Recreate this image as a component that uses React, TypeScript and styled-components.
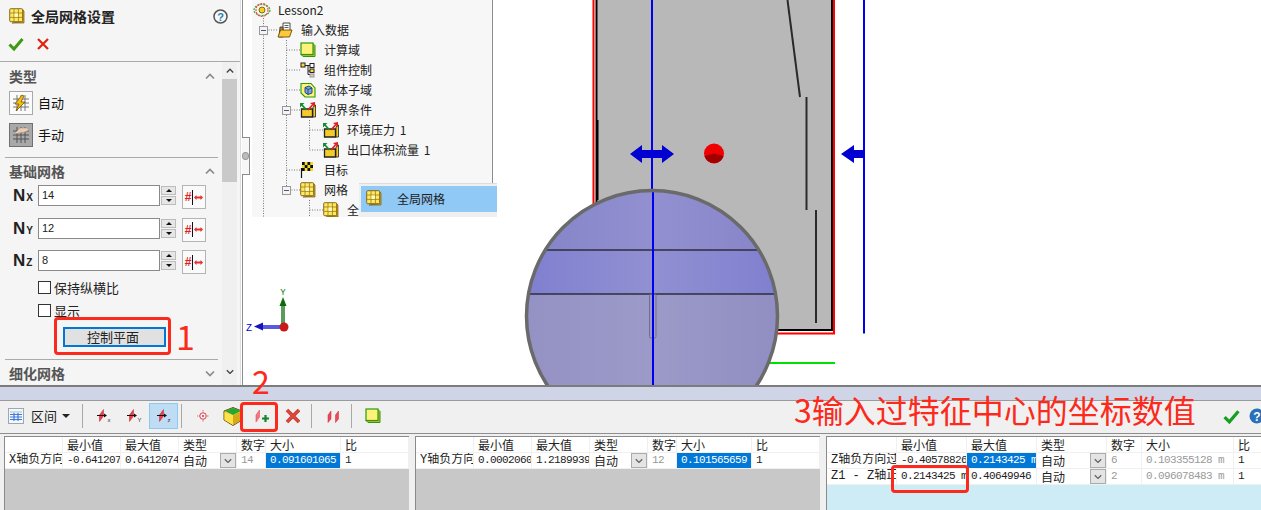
import React from "react";
import styled, { createGlobalStyle } from "styled-components";

const CJK = `"Noto Sans CJK SC", "Liberation Sans", sans-serif`;
const RED = "#fb2a1c";

const Global = createGlobalStyle`
  html, body { margin: 0; padding: 0; background: #fff; }
  body { font-family: ${CJK}; color: #111; }
  * { box-sizing: border-box; }
`;

const Page = styled.div`width:1261px;height:510px;display:flex;flex-direction:column;overflow:hidden;position:relative;`;
const Top = styled.div`height:385px;display:flex;position:relative;`;

/* ---------- left property pane ---------- */
const Pane = styled.aside`width:241px;flex:none;background:#f5f5f5;border-right:1px solid #dedede;display:flex;flex-direction:column;position:relative;`;
const Sash = styled.div`width:2px;flex:none;background:linear-gradient(90deg,#fff 0 1px,#8c8c8c 1px);position:relative;z-index:3;`;
const Notch = styled.div`position:absolute;left:1px;top:137px;width:8px;height:38px;border:1px solid #8c8c8c;border-left:0;background:#f7f7f7;display:flex;align-items:center;justify-content:center;
  &::after{content:"";width:6px;height:6px;border-radius:50%;background:#bbb;border:1px solid #999;}`;
const PaneHeader = styled.header`height:32px;display:flex;align-items:center;padding:0 12px 0 9px;`;
const PaneTitle = styled.h1`margin:0 0 0 6px;font-size:14px;font-weight:700;line-height:18px;flex:1;color:#222;`;
const PaneActions = styled.div`height:30px;display:flex;align-items:center;gap:13px;padding:0 0 6px 8px;border-bottom:1px solid #aaa;`;
const PaneBody = styled.div`flex:1;display:flex;min-height:0;`;
const Sections = styled.div`width:222px;flex:none;padding-top:1px;overflow:hidden;`;
const SectionHead = styled.div`height:20px;margin-top:3px;padding:0 7px 0 9px;display:flex;align-items:center;justify-content:space-between;font-size:14px;font-weight:700;color:#555;`;
const Rule = styled.div<{ $top: number }>`height:1px;background:#aaa;margin:${(p) => p.$top}px 4px 0 5px;`;
const ModeRow = styled.div<{ $top: number }>`display:flex;align-items:center;gap:5px;margin:${(p) => p.$top}px 0 0 9px;font-size:13px;height:24px;`;
const ModeText = styled.span`padding-bottom:2px;`;
const ModeButton = styled.div<{ $on?: boolean }>`width:24px;height:24px;border:1px solid ${(p) => (p.$on ? "#707070" : "#a8a8a8")};background:${(p) => (p.$on ? "#a9a9a9" : "#fbfbfb")};display:flex;align-items:center;justify-content:center;`;
const Fields = styled.div`display:flex;flex-direction:column;gap:8.5px;margin-top:4px;`;
const FieldRow = styled.div`display:flex;height:24px;align-items:flex-start;padding-left:13px;`;
const FieldLabel = styled.div`width:25px;font:700 17px/21px "Liberation Sans",sans-serif;color:#222;
  small{font-size:10px;margin-left:1px;}`;
const NumberField = styled.div`width:122px;height:21px;border:1px solid #8a8a8a;background:#fff;font:11px/18px "Liberation Sans",sans-serif;padding-left:3px;color:#222;`;
const Spin = styled.div`width:15px;margin-left:1px;display:flex;flex-direction:column;gap:1px;padding-top:1px;`;
const SpinButton = styled.div<{ $down?: boolean }>`height:9px;background:#e6e6e6;border:1px solid #bcbcbc;display:flex;align-items:center;justify-content:center;
  &::after{content:"";border-left:3.5px solid transparent;border-right:3.5px solid transparent;${(p) => (p.$down ? "border-top:3.5px solid #111;" : "border-bottom:3.5px solid #111;")}}`;
const PitchButton = styled.div`width:24px;height:24px;margin-left:6px;border:1px solid #b4b4b4;background:#fafafa;display:flex;align-items:center;justify-content:center;gap:1px;font:700 12px/1 "Liberation Sans",sans-serif;color:#e02020;`;
const CheckRow = styled.label<{ $top: number }>`display:flex;align-items:center;height:13px;margin:${(p) => p.$top}px 0 0 38px;font-size:13px;color:#222;`;
const Box = styled.span`width:13px;height:13px;border:1px solid #333;background:#fff;margin-right:3px;flex:none;`;
const PlaneButton = styled.div`width:103px;height:20px;margin:10px 0 0 63px;border:2px solid #0078d7;background:#e1e1e1;font-size:13px;line-height:16px;text-align:center;color:#222;padding-right:3px;`;
const ScrollBar = styled.div`width:15px;flex:none;background:#f0f0f0;position:relative;display:flex;flex-direction:column;`;
const ScrollArrow = styled.div<{ $end?: boolean }>`height:17px;display:flex;align-items:center;justify-content:center;margin-bottom:${(p) => (p.$end ? 5 : 0)}px;`;
const ScrollThumb = styled.div`height:103px;background:#c9c9c9;`;
const ScrollSpacer = styled.div`flex:1;`;

const Mark = styled.div<{ $x: number; $y: number; $w: number; $h: number }>`position:absolute;left:${(p) => p.$x}px;top:${(p) => p.$y}px;width:${(p) => p.$w}px;height:${(p) => p.$h}px;border:3px solid ${RED};border-radius:4px;z-index:5;pointer-events:none;`;
const Note = styled.div<{ $x: number; $y: number; $size: number }>`position:absolute;left:${(p) => p.$x}px;top:${(p) => p.$y}px;font-size:${(p) => p.$size}px;line-height:40px;color:${RED};white-space:nowrap;z-index:5;font-weight:400;`;

/* ---------- viewport + tree ---------- */
const Main = styled.main`flex:1;position:relative;overflow:hidden;background:#fff;`;
const Scene = styled.svg`display:block;width:100%;height:100%;`;
const Tree = styled.nav`position:absolute;left:9px;top:0;width:241px;height:217px;background:#f7f7f7;border-right:1px solid #8c8c8c;overflow:hidden;`;
const TreeLines = styled.svg`position:absolute;left:0;top:0;width:241px;height:217px;`;
const TreeRow = styled.div<{ $level: number }>`position:relative;height:20px;display:flex;align-items:center;padding-left:${(p) => (p.$level === 0 ? 2 : p.$level * 23 + 2)}px;font-size:12px;color:#222;white-space:nowrap;word-spacing:2px;
  svg{flex:none;} span.t{margin-left:8px;padding-bottom:2px;}`;
const Expander = styled.div`width:9px;height:9px;margin:0 9px 0 -18px;border:1px solid #999;background:#f4f4f4;position:relative;flex:none;
  &::after{content:"";position:absolute;left:1px;right:1px;top:3px;height:1px;background:#557;}`;
const Popup = styled.div`position:absolute;left:116px;top:183px;width:138px;height:34px;background:#efefef;border-top:1px solid #ddd;padding:2px 0 0 2px;z-index:2;`;
const PopupItem = styled.div`height:26px;background:#90c8f6;display:flex;align-items:center;padding:0 0 2px 5px;font-size:12px;color:#222;
  span{margin-left:15px;}`;

/* ---------- bottom editor ---------- */
const Dock = styled.section`height:125px;position:relative;border-top:2px solid #7c7c7c;background:#f0f0f0;display:flex;flex-direction:column;`;
const Band = styled.div`height:13px;background:#cfd4e6;border-bottom:1px solid #9a9a9a;box-sizing:content-box;`;
const Toolbar = styled.div`height:32px;display:flex;align-items:center;padding:0 0 2px 8px;background:#f0f0f0;overflow:hidden;flex:none;`;
const RangeLabel = styled.div`font-size:13px;margin:0 5px 2px 7px;color:#222;`;
const Caret = styled.div`border-left:4px solid transparent;border-right:4px solid transparent;border-top:4px solid #222;margin-right:9px;`;
const Sep = styled.div`width:1px;height:24px;background:#a8a8a8;margin:0 6px 0 3px;flex:none;`;
const Tool = styled.div<{ $w?: number; $on?: boolean }>`width:${(p) => p.$w ?? 30}px;height:26px;display:flex;align-items:center;justify-content:center;flex:none;${(p) => (p.$on ? "background:#bfdcf5;border:1px solid #90c8f0;" : "")}`;
const ToolEnd = styled.div`margin-left:auto;display:flex;align-items:center;gap:9px;margin-right:-4px;`;
const Grids = styled.div`flex:1;display:flex;gap:6px;padding-left:4px;border-top:1px solid #8e8e8e;padding-top:2px;min-height:0;`;
const GridPane = styled.div<{ $w: number; $tint?: boolean }>`width:${(p) => p.$w}px;flex:none;background:${(p) => (p.$tint ? "#cdecf5" : "#c8c8c8")};border:solid #8a8a8a;border-width:1px 0 0 1px;`;
const Table = styled.div<{ $cols: string }>`display:grid;grid-template-columns:${(p) => p.$cols};grid-auto-rows:16px;background:#fff;`;
const Cell = styled.div<{ $sel?: boolean; $dim?: boolean; $mono?: boolean }>`height:16px;padding-left:4px;overflow:hidden;white-space:nowrap;border-right:1px solid #f0f0f0;border-bottom:1px solid #f0f0f0;display:flex;align-items:center;justify-content:space-between;
  font:${(p) => (p.$mono ? `11px/15px "Liberation Mono",monospace` : `12px/15px ${CJK}`)};${(p) => (p.$mono ? "letter-spacing:-0.6px;" : "")}
  color:${(p) => (p.$sel ? "#fff" : p.$dim ? "#9a9a9a" : "#222")};background:${(p) => (p.$sel ? "#0078d7" : "#fff")};`;
const RowLabel = styled.span`font:12px/15px "Liberation Mono","Noto Sans CJK SC",monospace;`;
const Drop = styled.div`width:16px;height:15px;background:#e4e4e4;border:1px solid #ababab;flex:none;display:flex;align-items:center;justify-content:center;`;

/* ---------- icons ---------- */
const Check = ({ s = 16, c = "#3f9a12" }: { s?: number; c?: string }) => (
  <svg width={s} height={s} viewBox="0 0 16 16"><path d="M1.500 8.500 6 13 14.500 3" fill="none" stroke={c} strokeWidth="3" /></svg>
);
const Cross = () => (
  <svg width="12" height="12" viewBox="0 0 12 12"><path d="M1 1 11 11M11 1 1 11" stroke="#e2200e" strokeWidth="2.200" /></svg>
);
const Help = () => (
  <svg width="15" height="15" viewBox="0 0 15 15"><circle cx="7.500" cy="7.500" r="6.500" fill="#f4f8fb" stroke="#555" strokeWidth="1.500" /><text x="7.500" y="11.500" textAnchor="middle" fontFamily="Liberation Sans" fontWeight="700" fontSize="11" fill="#2c7da8">?</text></svg>
);
const Chevron = ({ down, c = "#8a8a8a", s = 10 }: { down?: boolean; c?: string; s?: number }) => (
  <svg width={s} height={s * 0.7} viewBox="0 0 10 7"><path d={down ? "M1 1.500 5 5.500 9 1.500" : "M1 5.500 5 1.500 9 5.500"} fill="none" stroke={c} strokeWidth="1.700" /></svg>
);
const Mesh = ({ s = 16 }: { s?: number }) => (
  <svg width={s} height={s} viewBox="0 0 16 16">
    <path d="M3 15h12V3l-1.500-1.500V13.500z" fill="#d8a820" stroke="#7a5c10" strokeWidth=".7" />
    <rect x=".7" y=".7" width="13" height="13" rx="1" fill="#ffe95e" stroke="#7a5c10" strokeWidth=".9" />
    <path d="M5 1v12.500M9.400 1v12.500M1 5h12.500M1 9.400h12.500" stroke="#9a7a18" strokeWidth=".8" />
    <rect x="5.500" y="5.500" width="3.400" height="3.400" fill="#fffbc8" />
  </svg>
);
const GridBolt = () => (
  <svg width="18" height="18" viewBox="0 0 18 18">
    <path d="M5 1v16M9 1v16M13 1v16M1 5h16M1 9h16M1 13h16" stroke="#777" />
    <path d="M10 1 3 10h4l-3 7 9-9H9l3-6z" fill="#f6c010" stroke="#7a5200" strokeWidth=".8" />
  </svg>
);
const GridHand = () => (
  <svg width="18" height="18" viewBox="0 0 18 18">
    <path d="M5 1v16M9 1v16M13 1v16M1 5h16M1 9h16M1 13h16" stroke="#555" />
    <path d="M2 8 8 2h7l2 2-4 2-6 1z" fill="#e8cdb0" stroke="#a88" strokeWidth=".5" />
  </svg>
);
const PitchArrow = () => (
  <svg width="9" height="7" viewBox="0 0 9 7"><path d="M0 3.500 2.500 1v1.500h4V1L9 3.500 6.500 6V4.500h-4V6z" fill="#e23030" /></svg>
);
const Rings = () => (
  <svg width="18" height="16" viewBox="0 0 18 16" style={{ marginLeft: -1, marginRight: -1 }}>
    <ellipse cx="9" cy="8" rx="8" ry="5.500" fill="none" stroke="#3aa040" strokeWidth="1.200" strokeDasharray="2 1" />
    <ellipse cx="9" cy="8" rx="6" ry="6.500" fill="none" stroke="#e05040" strokeWidth="1.200" strokeDasharray="2 1" />
    <circle cx="9" cy="8" r="3" fill="#f2d020" stroke="#8a6a10" />
  </svg>
);
const Folder = () => (
  <svg width="16" height="16" viewBox="0 0 16 16">
    <path d="M6 1h7v8H6z" fill="#fff" stroke="#333" strokeWidth=".9" />
    <path d="M7.500 3.500h4M7.500 5.500h4" stroke="#333" strokeWidth=".8" />
    <path d="M3 5h3v10H2z" fill="#b08a20" stroke="#333" strokeWidth=".8" />
    <path d="M1 15 3.500 8H15l-2.500 7z" fill="#ffc93a" stroke="#6a4a08" strokeWidth=".9" />
  </svg>
);
const Domain = () => (
  <svg width="16" height="16" viewBox="0 0 16 16">
    <path d="M13 1.500 15 3.500v11H3L1 12.500" fill="#c9b430" stroke="#2a9a10" />
    <rect x="1" y="1" width="12" height="11.500" fill="#fff27a" stroke="#2a9a10" strokeWidth="1.200" />
  </svg>
);
const Component = () => (
  <svg width="16" height="16" viewBox="0 0 16 16">
    <path d="M5 3.500h5M8 3.500v5.500h2M8 9v3.500h2" fill="none" stroke="#222" />
    <rect x="1" y="1" width="4" height="4" fill="#ffd84a" stroke="#222" />
    <rect x="10" y="1.500" width="4" height="4" fill="#fff" stroke="#222" />
    <rect x="10" y="7" width="4" height="3.500" fill="#ffd84a" stroke="#222" />
    <rect x="10" y="12" width="4" height="3" fill="#ccc" stroke="#999" />
  </svg>
);
const Fluid = () => (
  <svg width="16" height="16" viewBox="0 0 16 16">
    <path d="M1 1.500h10L15 6v9H5L1 11z" fill="#fff27a" stroke="#2a9a10" strokeWidth="1.100" />
    <path d="M5 5.500 9 4l3 2v5l-4 1.500-3-2z" fill="#7aa8e0" stroke="#123a70" strokeWidth=".9" />
    <path d="M5 5.500 8 7.500 12 6M8 7.500v5" fill="none" stroke="#123a70" strokeWidth=".8" />
  </svg>
);
const Boundary = () => (
  <svg width="16" height="16" viewBox="0 0 16 16">
    <path d="M1.500 7h11v8h-11z" fill="#f3cc2a" stroke="#222" strokeWidth="1.300" />
    <path d="M13 5v10h2.500V3z" fill="#f3cc2a" stroke="#222" strokeWidth=".8" />
    <path d="M1.500 2.500 6.500 8" stroke="#109030" strokeWidth="1.800" />
    <path d="M0 1h4.500L0 5.500z" fill="#109030" />
    <path d="M8 8 12.500 3" stroke="#e02020" strokeWidth="1.800" />
    <path d="M15 0v5l-5-4z" fill="#e02020" />
  </svg>
);
const Flag = () => (
  <svg width="16" height="16" viewBox="0 0 16 16">
    <path d="M1.500 6v10" stroke="#111" strokeWidth="1.200" />
    <rect x="2" y="0" width="11" height="9" fill="#f4d82a" />
    <path d="M2 0h2.700v3H2zM7.500 0h2.700v3H7.500zM4.700 3h2.800v3H4.700zM10.200 3H13v3h-2.800zM2 6h2.700v3H2zM7.500 6h2.700v3H7.500z" fill="#111" />
  </svg>
);
const TableIcon = () => (
  <svg width="16" height="16" viewBox="0 0 16 16">
    <rect x=".5" y=".5" width="15" height="15" fill="#f4f8fc" stroke="#9aa8b8" />
    <rect x="2" y="3" width="12" height="2" fill="#d0d8e0" />
    <path d="M2 6.500h12M2 9h12M2 11.500h12M6 5v8M10 5v8" stroke="#3f7ad8" strokeWidth="1.200" />
  </svg>
);
const Plane = ({ axis }: { axis: string }) => (
  <svg width="16" height="16" viewBox="0 0 16 16">
    <path d="M3.500 13.500V7L7.500 1.500V8z" fill="#ef3a46" stroke="#c62030" strokeWidth=".5" />
    <path d="M1 7.500h8" stroke="#111" strokeWidth="1" />
    <path d="M8 5.500 11 7.500 8 9.500z" fill="#111" />
    <text x="11.500" y="13.500" fontSize="6" fontFamily="Liberation Sans" fill="#333">{axis}</text>
  </svg>
);
const Target = () => (
  <svg width="12" height="12" viewBox="0 0 14 14">
    <circle cx="7" cy="7" r="3.800" fill="none" stroke="#e03040" strokeWidth="1.100" />
    <circle cx="7" cy="7" r="1.200" fill="#e03040" />
    <path d="M7 0v2.500M7 11.500V14M0 7h2.500M11.500 7H14" stroke="#e03040" strokeDasharray="1 1" />
  </svg>
);
const Cube = () => (
  <svg width="20" height="19" viewBox="0 0 20 19">
    <path d="M1 4 10 .5 19 4v9l-9 5.500L1 13z" fill="#f4cf2a" stroke="#6a5010" />
    <path d="M2 4 10 1l8 3-8 4z" fill="#22a838" />
    <path d="M10 8.500v9.500L18.500 13V4.500z" fill="#d6a818" />
    <path d="M1.500 5 10 8.500v9.500L1.500 13z" fill="#ffe14a" />
  </svg>
);
const PlanePlus = () => (
  <svg width="16" height="14" viewBox="0 0 16 14">
    <path d="M1 13V6L4.500 1v7z" fill="#f47680" stroke="#e05060" strokeWidth=".6" />
    <path d="M10.500 6v7M7 9.500h7" stroke="#16842a" strokeWidth="2.200" />
  </svg>
);
const BigCross = () => (
  <svg width="16" height="16" viewBox="0 0 16 16"><path d="M2 2 14 14M14 2 2 14" stroke="#c83a30" strokeWidth="3.600" /><path d="M2 2 14 14M14 2 2 14" stroke="#e8483c" strokeWidth="1.500" /></svg>
);
const DoublePlane = () => (
  <svg width="13" height="13" viewBox="0 0 13 13">
    <path d="M1 12.500V5L4 1v8z" fill="#ee4a56" stroke="#c62a38" strokeWidth=".5" />
    <path d="M8.500 12.500V5L11.500 1v8z" fill="#ee4a56" stroke="#c62a38" strokeWidth=".5" />
  </svg>
);
const DropChevron = () => <Chevron down s={8} c="#666" />;

/* ---------- data ---------- */
type Row = { cells: string[]; sel: number; dim?: boolean };
const headers = ["", "最小值", "最大值", "类型", "数字", "大小", "比"];

const GridTable = ({ cols, rows }: { cols: string; rows: Row[] }) => (
  <Table $cols={cols}>
    {headers.map((h, i) => <Cell key={i}>{h}</Cell>)}
    {rows.map((r, ri) => r.cells.map((c, i) => {
      const key = `${ri}-${i}`;
      if (i === 3) return <Cell key={key}>{c}<Drop><DropChevron /></Drop></Cell>;
      return (
        <Cell key={key} $mono={i !== 0} $sel={r.sel === i} $dim={r.sel !== i && (i === 4 || (i === 5 && r.dim))}>
          {i === 0 ? <RowLabel>{c}</RowLabel> : c}
        </Cell>
      );
    }))}
  </Table>
);

const treeRows: { level: number; icon: React.ReactNode; label: string; exp?: boolean }[] = [
  { level: 0, icon: <Rings />, label: "Lesson2" },
  { level: 1, icon: <Folder />, label: "输入数据", exp: true },
  { level: 2, icon: <Domain />, label: "计算域" },
  { level: 2, icon: <Component />, label: "组件控制" },
  { level: 2, icon: <Fluid />, label: "流体子域" },
  { level: 2, icon: <Boundary />, label: "边界条件", exp: true },
  { level: 3, icon: <Boundary />, label: "环境压力 1" },
  { level: 3, icon: <Boundary />, label: "出口体积流量 1" },
  { level: 2, icon: <Flag />, label: "目标" },
  { level: 2, icon: <Mesh />, label: "网格", exp: true },
  { level: 3, icon: <Mesh />, label: "全局网格" },
];

const fields = [["N", "X", "14"], ["N", "Y", "12"], ["N", "Z", "8"]];

const Viewport = () => (
  <Scene viewBox="243 0 1018 385" preserveAspectRatio="none">
    <defs>
      <clipPath id="lens"><circle cx="652" cy="316" r="125" /></clipPath>
      <linearGradient id="b1" x1="0" x2="1" y1="0" y2="0"><stop offset="0" stopColor="#8383c8" /><stop offset=".5" stopColor="#9290d0" /><stop offset="1" stopColor="#8684c8" /></linearGradient>
      <linearGradient id="b2" x1="0" x2="1" y1="0" y2="0"><stop offset="0" stopColor="#7f7fd0" /><stop offset=".5" stopColor="#9190d2" /><stop offset="1" stopColor="#7f7fd0" /></linearGradient>
      <linearGradient id="b3" x1="0" x2="1" y1="0" y2="0"><stop offset="0" stopColor="#9492c4" /><stop offset=".5" stopColor="#9c9ac8" /><stop offset="1" stopColor="#908ec2" /></linearGradient>
    </defs>
    <path d="M593.500 0V333.500H834V0" fill="none" stroke="#f00" strokeWidth="2" />
    <path d="M596.500 0V330H832V0" fill="#b8b8b8" stroke="#000" strokeWidth="2" />
    <path d="M597.500 120V200" stroke="#000" strokeWidth="2" />
    <path d="M787.500 0 800 97" stroke="#2a2a2a" strokeWidth="2" />
    <path d="M806.500 97V210M816 210V323" stroke="#2a2a2a" strokeWidth="2" />
    <path d="M770 363H835" stroke="#00e000" strokeWidth="2" />
    <path d="M864 0V333.500" stroke="#0000f0" strokeWidth="2" />
    <path d="M630 154 642 145V150H662V145L674 154 662 163V158H642V163z" fill="#0000d0" />
    <path d="M652 0V190" stroke="#0000f0" strokeWidth="2" />
    <path d="M841 154 854 145V150H864V158H854V163z" fill="#0000d0" />
    <circle cx="714" cy="153.500" r="10" fill="#f00000" />
    <path d="M704.500 156 714 153.500 723.500 156A10 10 0 0 1 704.500 156z" fill="#a00000" />
    <g clipPath="url(#lens)">
      <rect x="525" y="189" width="254" height="61" fill="url(#b1)" />
      <rect x="525" y="250" width="254" height="44" fill="url(#b2)" />
      <rect x="525" y="294" width="254" height="100" fill="url(#b3)" />
      <path d="M520 250H785M520 294H785" stroke="#2e2e3e" strokeWidth="1.700" />
      <rect x="649.500" y="294" width="6.500" height="44" rx="1.500" fill="none" stroke="#70708a" />
      <path d="M653 189V385" stroke="#0000f0" strokeWidth="2" />
    </g>
    <circle cx="652" cy="316" r="125.500" fill="none" stroke="#6a6a6a" strokeWidth="3.500" />
    <path d="M283 327V305" stroke="#5a9a5a" strokeWidth="4" />
    <path d="M283 297 279.500 306H286.500z" fill="#0c6a0c" />
    <path d="M283 327H263" stroke="#5a5ae0" strokeWidth="4" />
    <path d="M254 326.500 263 322.500V330.500z" fill="#1414b8" />
    <circle cx="284" cy="327" r="4.500" fill="#c81818" />
    <text x="283" y="295" textAnchor="middle" fontSize="9" fontFamily="Liberation Mono" fill="#0a7a0a">Y</text>
    <text x="249" y="331" textAnchor="middle" fontSize="10" fontFamily="Liberation Mono" fill="#0000e0">Z</text>
  </Scene>
);

export default function App() {
  return (
    <Page>
      <Global />
      <Top>
        <Pane>
          <PaneHeader>
            <Mesh />
            <PaneTitle>全局网格设置</PaneTitle>
            <Help />
          </PaneHeader>
          <PaneActions><Check /><Cross /></PaneActions>
          <PaneBody>
            <Sections>
              <SectionHead>类型<Chevron /></SectionHead>
              <ModeRow $top={5}><ModeButton><GridBolt /></ModeButton><ModeText>自动</ModeText></ModeRow>
              <ModeRow $top={8}><ModeButton $on><GridHand /></ModeButton><ModeText>手动</ModeText></ModeRow>
              <Rule $top={10} />
              <SectionHead>基础网格<Chevron /></SectionHead>
              <Fields>
                {fields.map(([n, a, v]) => (
                  <FieldRow key={a}>
                    <FieldLabel>{n}<small>{a}</small></FieldLabel>
                    <NumberField>{v}</NumberField>
                    <Spin><SpinButton /><SpinButton $down /></Spin>
                    <PitchButton>#<svg width="1" height="15"><rect width="1" height="15" fill="#111" /></svg><PitchArrow /></PitchButton>
                  </FieldRow>
                ))}
              </Fields>
              <CheckRow $top={7}><Box />保持纵横比</CheckRow>
              <CheckRow $top={10}><Box />显示</CheckRow>
              <PlaneButton>控制平面</PlaneButton>
              <Rule $top={12} />
              <SectionHead>细化网格<Chevron down /></SectionHead>
            </Sections>
            <ScrollBar>
              <ScrollArrow><Chevron c="#444" s={8} /></ScrollArrow>
              <ScrollThumb />
              <ScrollSpacer />
              <ScrollArrow $end><Chevron down c="#444" s={8} /></ScrollArrow>
            </ScrollBar>
          </PaneBody>
          <Mark $x={54} $y={317} $w={117} $h={38} />
          <Note $x={176} $y={316} $size={34}>1</Note>
        </Pane>
        <Sash><Notch /></Sash>
        <Main>
          <Viewport />
          <Tree>
            <TreeLines viewBox="0 0 241 217">
              <path d="M11.500 18V217M34.500 40V190M57.500 120V150M57.500 200V217M11.500 30H25M34.500 50H48M34.500 70H48M34.500 90H48M34.500 110H48M34.500 170H48M34.500 190H48M57.500 130H71M57.500 150H71M57.500 210H71" fill="none" stroke="#777" strokeDasharray="1 1.500" />
            </TreeLines>
            {treeRows.map((r) => (
              <TreeRow key={r.label} $level={r.level}>
                {r.exp && <Expander />}
                {r.icon}
                <span className="t">{r.label}</span>
              </TreeRow>
            ))}
          </Tree>
          <Popup>
            <PopupItem><Mesh /><span>全局网格</span></PopupItem>
          </Popup>
        </Main>
      </Top>
      <Dock>
        <Band />
        <Toolbar>
          <TableIcon />
          <RangeLabel>区间</RangeLabel>
          <Caret />
          <Sep />
          <Tool><Plane axis="x" /></Tool>
          <Tool><Plane axis="Y" /></Tool>
          <Tool $w={29} $on><Plane axis="z" /></Tool>
          <Sep />
          <Tool><Target /></Tool>
          <Tool><Cube /></Tool>
          <Tool><PlanePlus /></Tool>
          <Tool><BigCross /></Tool>
          <Sep />
          <Tool><DoublePlane /></Tool>
          <Sep />
          <Tool><Domain /></Tool>
          <ToolEnd><Check s={17} c="#14a020" />
            <svg width="16" height="16" viewBox="0 0 16 16"><circle cx="8" cy="8" r="7.500" fill="#2a70b8" /><text x="8" y="12.500" textAnchor="middle" fontSize="12" fontWeight="700" fontFamily="Liberation Sans" fill="#fff">?</text></svg>
          </ToolEnd>
        </Toolbar>
        <Grids>
          <GridPane $w={405}>
            <GridTable cols="58px 58px 58px 58px 29px 75px 1fr" rows={[{ cells: ["X轴负方向", "-0.6412074 m", "0.6412074 m", "自动", "14", "0.091601065", "1"], sel: 5 }]} />
          </GridPane>
          <GridPane $w={405}>
            <GridTable cols="58px 58px 58px 58px 29px 75px 1fr" rows={[{ cells: ["Y轴负方向", "0.00020600 m", "1.21899391 m", "自动", "12", "0.101565659", "1"], sel: 5 }]} />
          </GridPane>
          <GridPane $w={436} $tint>
            <GridTable cols="70px 70px 70px 70px 35px 92px 1fr" rows={[
              { cells: ["Z轴负方向过", "-0.40578826 m", "0.2143425 m", "自动", "6", "0.103355128 m", "1"], sel: 2, dim: true },
              { cells: ["Z1 - Z轴正方向", "0.2143425 m", "0.40649946 m", "自动", "2", "0.096078483 m", "1"], sel: -1, dim: true },
            ]} />
          </GridPane>
        </Grids>
        <Mark $x={240} $y={15} $w={38} $h={30} />
        <Note $x={252} $y={-27} $size={32}>2</Note>
        <Note $x={794} $y={2} $size={32}>3输入过特征中心的坐标数值</Note>
        <Mark $x={891} $y={78} $w={78} $h={28} />
      </Dock>
    </Page>
  );
}
